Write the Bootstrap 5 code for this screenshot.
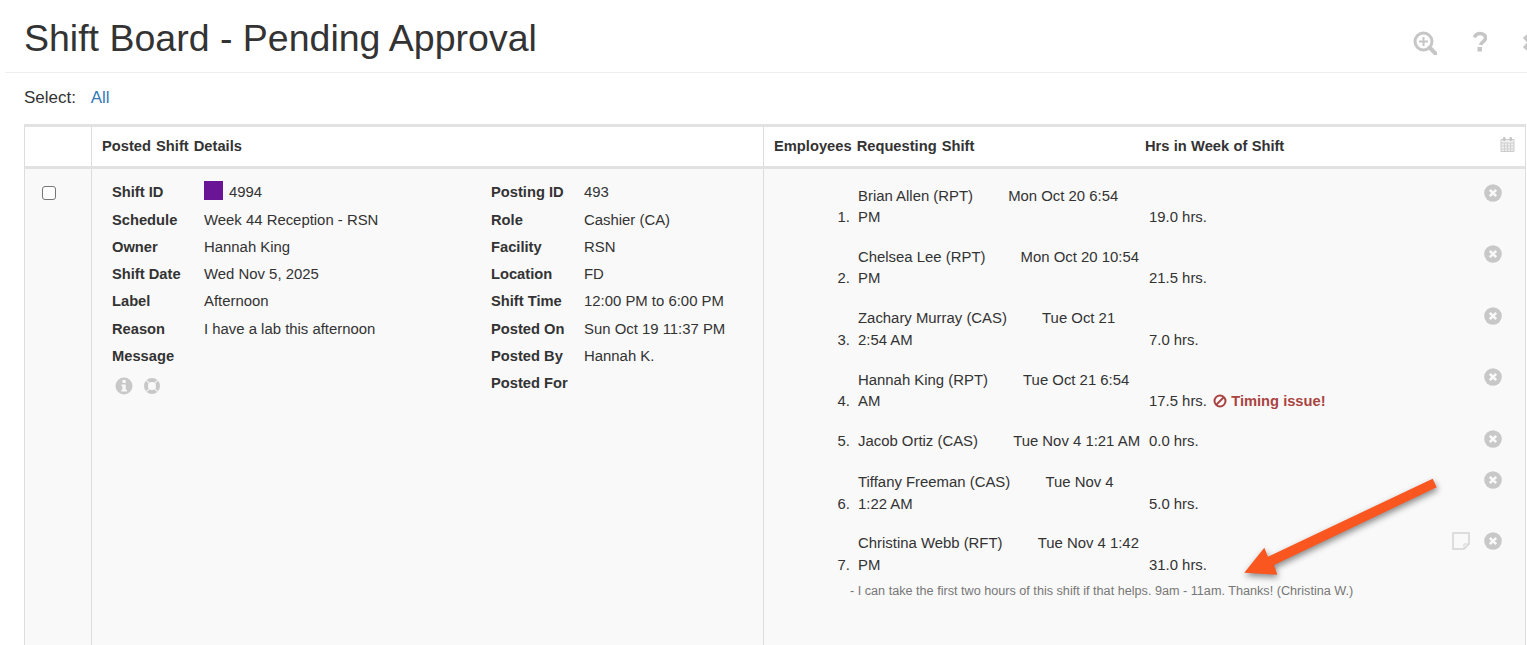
<!DOCTYPE html>
<html lang="en">
<head>
<meta charset="utf-8">
<title>Shift Board - Pending Approval</title>
<link rel="stylesheet" href="https://cdn.jsdelivr.net/npm/bootstrap@5.3.0/dist/css/bootstrap.min.css">
<style>
html,body{height:645px;overflow:hidden;background:#fff}
body{font-family:"Liberation Sans",Arial,sans-serif;font-size:14.9px;line-height:21.5px;color:#333;position:relative;width:1527px}
.page-head{margin-left:5px;height:73px;border-bottom:1px solid #eee;padding:0 0 0 19px}
.page-title{font-size:37.5px;line-height:40px;font-weight:400;margin:18px 0 0;color:#333}
.head-tools{gap:36px;margin-top:31px;width:114px;flex:none;overflow:hidden;height:24px}
.head-tools svg{flex:none;display:block}
.select-line{font-size:17px;line-height:22px;margin:14px 0 0 24px;height:37px}
.select-line a{color:#337ab7;text-decoration:none;margin-left:10px}
.board{width:1502px;margin:0 0 0 24px;table-layout:fixed;border-collapse:separate;border-spacing:0}
.board th,.board td{border-left:1px solid #ddd;padding:0;vertical-align:top}
.board tr>*:last-child{border-right:1px solid #ddd}
.board thead th{border-top:3px solid #e2e2e2;border-bottom:3px solid #e2e2e2;height:45px;font-weight:700;font-size:14.7px;background:#fff;vertical-align:middle;word-spacing:1px}
.board tbody td{background:#f9f9f9;height:480px}
.col-check{width:67px}
.col-post{width:672px}
.th-inner{padding-left:10px}
.th-emp{width:381px;padding-left:10px;flex:none}
.hrs-head{word-spacing:.2px}
.cal-icon{margin:0 10px 6px 0}
.check-box{width:14px;height:14px;margin:17px 0 0 17px;border:1px solid #767676;border-radius:3px;display:block}
.facts-wrap{padding:10.3px 0 0 20px}
.facts{display:grid;grid-template-columns:93px 1fr;grid-auto-rows:27.3px;line-height:27.3px}
.facts-left{width:379px;flex:none}
.facts-left .facts{grid-template-columns:92px 1fr}
.facts dt{font-weight:700;font-size:14.7px}
.facts dd{margin:0}
.swatch{display:inline-block;width:19px;height:19px;background:#6a1595;vertical-align:-3px;margin-right:6px;margin-top:-2px}
.mini-icons{gap:10px;margin:7px 0 0 3px}
.emp-list{list-style:none;margin:0;padding:16.5px 0 0 0}
.emp-row{display:flex;align-items:flex-end;padding-bottom:18.4px;position:relative}
.emp-row:nth-child(5){padding-bottom:19.5px}
.emp-num{width:94px;text-align:right;padding-right:8px;flex:none}
.emp-name{width:291px;flex:none;padding-right:6px}
.emp-when{margin-left:31px}
.emp-hrs{flex:1}
.emp-actions{position:absolute;right:23.5px;top:-1.5px;gap:14px}
.timing{color:#a94442;font-weight:700;font-size:14.7px;margin-left:2px}
.timing svg{vertical-align:-2px}
.emp-note{font-size:12.65px;line-height:16px;color:#777;margin:-11.5px 0 0 86px}
.annot{position:absolute;left:1230px;top:470px;filter:drop-shadow(1px 3px 3px rgba(0,0,0,.45));pointer-events:none}
</style>
</head>
<body>
<header class="page-head d-flex justify-content-between">
  <h1 class="page-title">Shift Board - Pending Approval</h1>
  <div class="head-tools d-flex align-items-start">
    <svg width="24" height="24" viewBox="0 0 24 24" aria-hidden="true"><circle cx="10.500" cy="10.500" r="8.500" fill="none" stroke="#c6c6c6" stroke-width="3"/><path d="M16.500 16.500l6 6" stroke="#c6c6c6" stroke-width="4" stroke-linecap="round"/><path d="M10.500 6v9M6 10.500h9" stroke="#c6c6c6" stroke-width="2"/></svg>
    <svg width="14" height="24" viewBox="0 0 14 24" aria-hidden="true"><path d="M1.500 6.500C2.500 3.500 4.500 2.500 7 2.500c3 0 5.500 1.700 5.500 4.500 0 3.800-4.500 3.500-4.500 7" fill="none" stroke="#c6c6c6" stroke-width="3.600"/><rect x="4.500" y="16" width="4.500" height="4.500" fill="#c6c6c6"/></svg>
    <svg width="18" height="24" viewBox="0 0 18 24" aria-hidden="true"><path d="M2 5l12 13M14 5L2 18" stroke="#c6c6c6" stroke-width="5.500"/></svg>
  </div>
</header>
<div class="select-line">Select: <a href="#">All</a></div>
<table class="board">
  <colgroup><col class="col-check"><col class="col-post"><col></colgroup>
  <thead>
    <tr>
      <th></th>
      <th><div class="th-inner">Posted Shift Details</div></th>
      <th>
        <div class="d-flex align-items-center">
          <div class="th-emp">Employees Requesting Shift</div>
          <div class="flex-grow-1 hrs-head">Hrs in Week of Shift</div>
          <svg class="cal-icon" width="15" height="16" viewBox="0 0 15 16" aria-hidden="true"><path d="M1 3.500h13v12H1z" fill="#eee" stroke="#ccc"/><path d="M1 7h13M1 10h13M1 13h13M4.500 7v8M7.500 7v8M10.500 7v8" stroke="#ccc" stroke-width=".8"/><rect x="3" y="1" width="2.500" height="4" rx="1" fill="#c4c4c4"/><rect x="9.500" y="1" width="2.500" height="4" rx="1" fill="#c4c4c4"/></svg>
        </div>
      </th>
    </tr>
  </thead>
  <tbody>
    <tr>
      <td><span class="check-box bg-white"></span></td>
      <td>
        <div class="facts-wrap d-flex">
          <div class="facts-left">
            <dl class="facts mb-0">
              <dt>Shift ID</dt><dd><span class="swatch"></span>4994</dd>
              <dt>Schedule</dt><dd>Week 44 Reception - RSN</dd>
              <dt>Owner</dt><dd>Hannah King</dd>
              <dt>Shift Date</dt><dd>Wed Nov 5, 2025</dd>
              <dt>Label</dt><dd>Afternoon</dd>
              <dt>Reason</dt><dd>I have a lab this afternoon</dd>
              <dt>Message</dt><dd></dd>
            </dl>
            <div class="mini-icons d-flex">
              <svg width="18" height="18" viewBox="0 0 18 18" aria-hidden="true"><circle cx="9" cy="9" r="8.500" fill="#c8c8c8"/><rect x="7.500" y="3" width="3.200" height="3" fill="#f9f9f9"/><path d="M6.500 7.500h4.200v5.200h1.300V14.500H6.300v-1.800h1.200V9.300H6.500z" fill="#f9f9f9"/></svg>
              <svg width="18" height="18" viewBox="0 0 18 18" aria-hidden="true"><circle cx="9" cy="9" r="6" fill="none" stroke="#c8c8c8" stroke-width="4"/><path d="M3.300 3.300l2.900 2.900M14.700 3.300l-2.900 2.900M3.300 14.700l2.900-2.900M14.700 14.700l-2.900-2.900" stroke="#f9f9f9" stroke-width="1.100"/></svg>
            </div>
          </div>
          <dl class="facts mb-0 flex-grow-1">
            <dt>Posting ID</dt><dd>493</dd>
            <dt>Role</dt><dd>Cashier (CA)</dd>
            <dt>Facility</dt><dd>RSN</dd>
            <dt>Location</dt><dd>FD</dd>
            <dt>Shift Time</dt><dd>12:00 PM to 6:00 PM</dd>
            <dt>Posted On</dt><dd>Sun Oct 19 11:37 PM</dd>
            <dt>Posted By</dt><dd>Hannah K.</dd>
            <dt>Posted For</dt><dd></dd>
          </dl>
        </div>
      </td>
      <td>
        <ol class="emp-list">
          <li class="emp-row"><span class="emp-num">1.</span><span class="emp-name">Brian Allen (RPT) <span class="emp-when">Mon Oct 20 6:54 PM</span></span><span class="emp-hrs">19.0 hrs.</span>
            <span class="emp-actions d-flex"><svg width="18" height="18" viewBox="0 0 18 18" aria-hidden="true"><use href="#x-circle"/></svg></span></li>
          <li class="emp-row"><span class="emp-num">2.</span><span class="emp-name">Chelsea Lee (RPT) <span class="emp-when">Mon Oct 20 10:54 PM</span></span><span class="emp-hrs">21.5 hrs.</span>
            <span class="emp-actions d-flex"><svg width="18" height="18" viewBox="0 0 18 18" aria-hidden="true"><use href="#x-circle"/></svg></span></li>
          <li class="emp-row"><span class="emp-num">3.</span><span class="emp-name">Zachary Murray (CAS) <span class="emp-when">Tue Oct 21 2:54 AM</span></span><span class="emp-hrs">7.0 hrs.</span>
            <span class="emp-actions d-flex"><svg width="18" height="18" viewBox="0 0 18 18" aria-hidden="true"><use href="#x-circle"/></svg></span></li>
          <li class="emp-row"><span class="emp-num">4.</span><span class="emp-name">Hannah King (RPT) <span class="emp-when">Tue Oct 21 6:54 AM</span></span><span class="emp-hrs">17.5 hrs. <span class="timing"><svg width="14" height="14" viewBox="0 0 14 14" aria-hidden="true"><circle cx="7" cy="7" r="5.500" fill="none" stroke="#a94442" stroke-width="2"/><path d="M3 11L11 3" stroke="#a94442" stroke-width="2"/></svg> Timing issue!</span></span>
            <span class="emp-actions d-flex"><svg width="18" height="18" viewBox="0 0 18 18" aria-hidden="true"><use href="#x-circle"/></svg></span></li>
          <li class="emp-row"><span class="emp-num">5.</span><span class="emp-name">Jacob Ortiz (CAS) <span class="emp-when">Tue Nov 4 1:21 AM</span></span><span class="emp-hrs">0.0 hrs.</span>
            <span class="emp-actions d-flex"><svg width="18" height="18" viewBox="0 0 18 18" aria-hidden="true"><use href="#x-circle"/></svg></span></li>
          <li class="emp-row"><span class="emp-num">6.</span><span class="emp-name">Tiffany Freeman (CAS) <span class="emp-when">Tue Nov 4 1:22 AM</span></span><span class="emp-hrs">5.0 hrs.</span>
            <span class="emp-actions d-flex"><svg width="18" height="18" viewBox="0 0 18 18" aria-hidden="true"><use href="#x-circle"/></svg></span></li>
          <li class="emp-row"><span class="emp-num">7.</span><span class="emp-name">Christina Webb (RFT) <span class="emp-when">Tue Nov 4 1:42 PM</span></span><span class="emp-hrs">31.0 hrs.</span>
            <span class="emp-actions d-flex"><svg width="18" height="18" viewBox="0 0 18 18" aria-hidden="true"><path d="M1 1h16v11l-5 5H1z" fill="none" stroke="#d4d4d4" stroke-width="1.500"/><path d="M17 12h-5v5" fill="none" stroke="#d4d4d4"/></svg><svg width="18" height="18" viewBox="0 0 18 18" aria-hidden="true"><use href="#x-circle"/></svg></span></li>
        </ol>
        <div class="emp-note">- I can take the first two hours of this shift if that helps. 9am - 11am. Thanks! (Christina W.)</div>
      </td>
    </tr>
  </tbody>
</table>
<svg width="0" height="0" class="position-absolute" aria-hidden="true"><symbol id="x-circle" viewBox="0 0 18 18"><circle cx="9" cy="9" r="8.800" fill="#c8c8c8"/><path d="M5.800 5.800l6.400 6.400M12.200 5.800l-6.400 6.400" stroke="#f9f9f9" stroke-width="2.600"/></symbol></svg>
<svg class="annot" width="220" height="120" viewBox="1230 470 220 120" aria-hidden="true"><path d="M1432.700 478.700L1436.700 487.300 1274 565 1277.300 574.700 1244.300 572.700 1264.300 547.700 1268 556.700z" fill="#f95620"/></svg>
</body>
</html>
